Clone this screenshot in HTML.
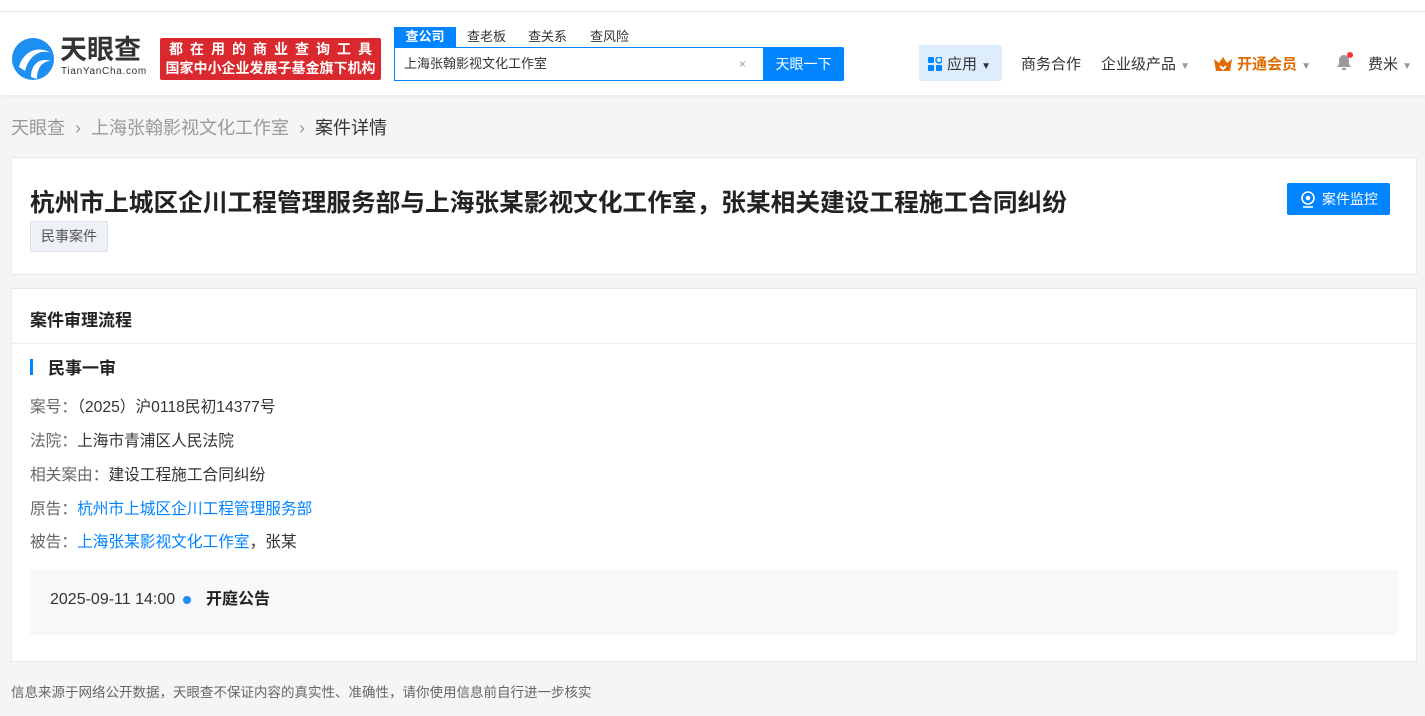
<!DOCTYPE html>
<html><head><meta charset="utf-8"><style>
*{margin:0;padding:0;box-sizing:border-box}
body{width:1425px;height:716px;background:#f5f5f5;font-family:"Liberation Sans","Noto Sans CJK SC",sans-serif;color:#333;position:relative;overflow:hidden}
.top{position:absolute;left:0;top:0;width:1425px;height:12px;background:#fff;border-bottom:1px solid #e8e8e8}
.hdr{position:absolute;left:0;top:12px;width:1425px;height:83px;background:#fff;box-shadow:0 2px 4px rgba(0,0,0,.05)}
.a{position:absolute;white-space:nowrap}
.card{position:absolute;background:#fff;border:1px solid #e9e9e9}
a{color:#0084ff;text-decoration:none}
.lbl{color:#666}
</style></head><body>
<div class="top"></div>
<div class="hdr">
 <svg class="a" style="left:11px;top:25px" width="44" height="44" viewBox="0 0 44 44"><circle cx="22" cy="22" r="21" fill="#1d8ff0"/><path d="M8 30 C12 14 28 8 40 16 C30 12 18 18 14 34Z" fill="#fff"/><path d="M20 40 C20 28 28 20 40 24 C32 24 26 30 26 42Z" fill="#fff"/></svg>
 <div class="a" style="left:60px;top:22px;font-size:27px;font-weight:bold;color:#333;line-height:32px">天眼查</div>
 <div class="a" style="left:61px;top:54px;font-size:10px;color:#333;letter-spacing:.7px">TianYanCha.com</div>
 <div class="a" style="left:160px;top:26px;width:221px;height:42px;background:#d9282e;border-radius:2px;color:#fff;font-size:14px;font-weight:bold;text-align:center;line-height:19px;padding-top:2px"><div style="letter-spacing:7px;padding-left:7px">都在用的商业查询工具</div><div style="font-size:14px">国家中小企业发展子基金旗下机构</div></div>
 <div class="a" style="left:394px;top:15px;width:62px;height:20px;background:#0084ff;color:#fff;font-size:13px;text-align:center;line-height:19px;font-weight:bold">查公司</div>
 <div class="a" style="left:467px;top:15px;font-size:13px;color:#333;line-height:19px">查老板</div>
 <div class="a" style="left:528px;top:15px;font-size:13px;color:#333;line-height:19px">查关系</div>
 <div class="a" style="left:590px;top:15px;font-size:13px;color:#333;line-height:19px">查风险</div>
 <div class="a" style="left:394px;top:35px;width:370px;height:34px;border:1px solid #0084ff;font-size:13px;line-height:32px;padding-left:9px">上海张翰影视文化工作室<span style="position:absolute;left:344px;color:#999;font-size:12px">×</span></div>
 <div class="a" style="left:763px;top:35px;width:81px;height:34px;background:#0084ff;color:#fff;font-size:14px;line-height:34px;text-align:center;border-radius:0 2px 2px 0">天眼一下</div>
 <div class="a" style="left:919px;top:33px;width:83px;height:36px;background:#deedfb;border-radius:2px"></div>
 <svg class="a" style="left:928px;top:45px" width="14" height="14"><rect x="0" y="0" width="6" height="6" rx="1" fill="#0084ff"/><rect x="8" y="0" width="6" height="6" rx="3" fill="none" stroke="#0084ff" stroke-width="1.5"/><rect x="0" y="8" width="6" height="6" rx="1" fill="#0084ff"/><rect x="8" y="8" width="6" height="6" rx="1" fill="#0084ff"/></svg>
 <div class="a" style="left:947px;top:41px;font-size:15px">应用 <span style="font-size:10px">▼</span></div>
 <div class="a" style="left:1021px;top:41px;font-size:15px">商务合作</div>
 <div class="a" style="left:1101px;top:41px;font-size:15px">企业级产品 <span style="font-size:10px;color:#999">▼</span></div>
 <svg class="a" style="left:1213px;top:44px" width="20" height="16"><path d="M1 3 L6 7 L10 1 L14 7 L19 3 L17 15 L3 15Z" fill="#e06b00"/><path d="M7 10 L10 13 L13 10" fill="none" stroke="#fff" stroke-width="2"/></svg>
 <div class="a" style="left:1237px;top:41px;font-size:15px;font-weight:bold;color:#e06b00">开通会员 <span style="font-size:10px;color:#999;font-weight:normal">▼</span></div>
 <svg class="a" style="left:1334px;top:40px" width="20" height="20"><path d="M3 15 L5 12 L5 8 A5 5 0 0 1 15 8 L15 12 L17 15Z" fill="#999"/><rect x="8" y="16" width="4" height="2" fill="#999"/><circle cx="16" cy="3" r="3" fill="#f33"/></svg>
 <div class="a" style="left:1368px;top:41px;font-size:15px">费米 <span style="font-size:10px;color:#999">▼</span></div>
</div>
<div class="a" style="left:11px;top:114px;font-size:18px;color:#999">天眼查 &nbsp;›&nbsp; 上海张翰影视文化工作室 &nbsp;›&nbsp; <span style="color:#333">案件详情</span></div>
<div class="card" style="left:11px;top:157px;width:1406px;height:118px">
 <div class="a" style="left:18px;top:25px;font-size:24.7px;font-weight:bold;color:#222">杭州市上城区企川工程管理服务部与上海张某影视文化工作室，张某相关建设工程施工合同纠纷</div>
 <div class="a" style="left:18px;top:63px;width:78px;height:31px;background:#eef1f5;border:1px solid #dde2e8;border-radius:2px;font-size:14px;color:#555;line-height:29px;text-align:center">民事案件</div>
 <div class="a" style="left:1275px;top:25px;width:103px;height:32px;background:#0084ff;border-radius:2px;color:#fff;font-size:14px;line-height:32px;padding-left:35px">案件监控</div>
 <svg class="a" style="left:1288px;top:33px" width="16" height="17"><circle cx="8" cy="7" r="6" fill="none" stroke="#fff" stroke-width="1.6"/><circle cx="8" cy="7" r="2.3" fill="#fff"/><path d="M3 16 L13 16" stroke="#fff" stroke-width="1.6"/></svg>
</div>
<div class="card" style="left:11px;top:288px;width:1406px;height:374px">
 <div class="a" style="left:18px;top:17px;font-size:17px;font-weight:bold;color:#222">案件审理流程</div>
 <div class="a" style="left:0;top:54px;width:1404px;height:1px;background:#eee"></div>
 <div class="a" style="left:18px;top:70px;width:3px;height:16px;background:#0084ff"></div>
 <div class="a" style="left:36px;top:65px;font-size:17px;font-weight:bold;color:#222">民事一审</div>
 <div class="a" style="left:18px;top:105px;font-size:15.7px"><span class="lbl">案号：</span>（2025）沪0118民初14377号</div>
 <div class="a" style="left:18px;top:139px;font-size:15.7px"><span class="lbl">法院：</span>上海市青浦区人民法院</div>
 <div class="a" style="left:18px;top:173px;font-size:15.7px"><span class="lbl">相关案由：</span>建设工程施工合同纠纷</div>
 <div class="a" style="left:18px;top:207px;font-size:15.7px"><span class="lbl">原告：</span><a>杭州市上城区企川工程管理服务部</a></div>
 <div class="a" style="left:18px;top:240px;font-size:15.7px"><span class="lbl">被告：</span><a>上海张某影视文化工作室</a>，张某</div>
 <div class="a" style="left:18px;top:281px;width:1368px;height:65px;background:#f7f8fa"></div>
 <div class="a" style="left:38px;top:301px;font-size:16px;line-height:20px">2025-09-11 14:00</div>
 <div class="a" style="left:171px;top:307px;width:8px;height:8px;border-radius:50%;background:#1d8ff0"></div>
 <div class="a" style="left:194px;top:300px;font-size:16px;font-weight:bold;color:#222;line-height:22px">开庭公告</div>
</div>
<div class="a" style="left:11px;top:681px;font-size:13.5px;color:#666">信息来源于网络公开数据，天眼查不保证内容的真实性、准确性，请你使用信息前自行进一步核实</div>
</body></html>
